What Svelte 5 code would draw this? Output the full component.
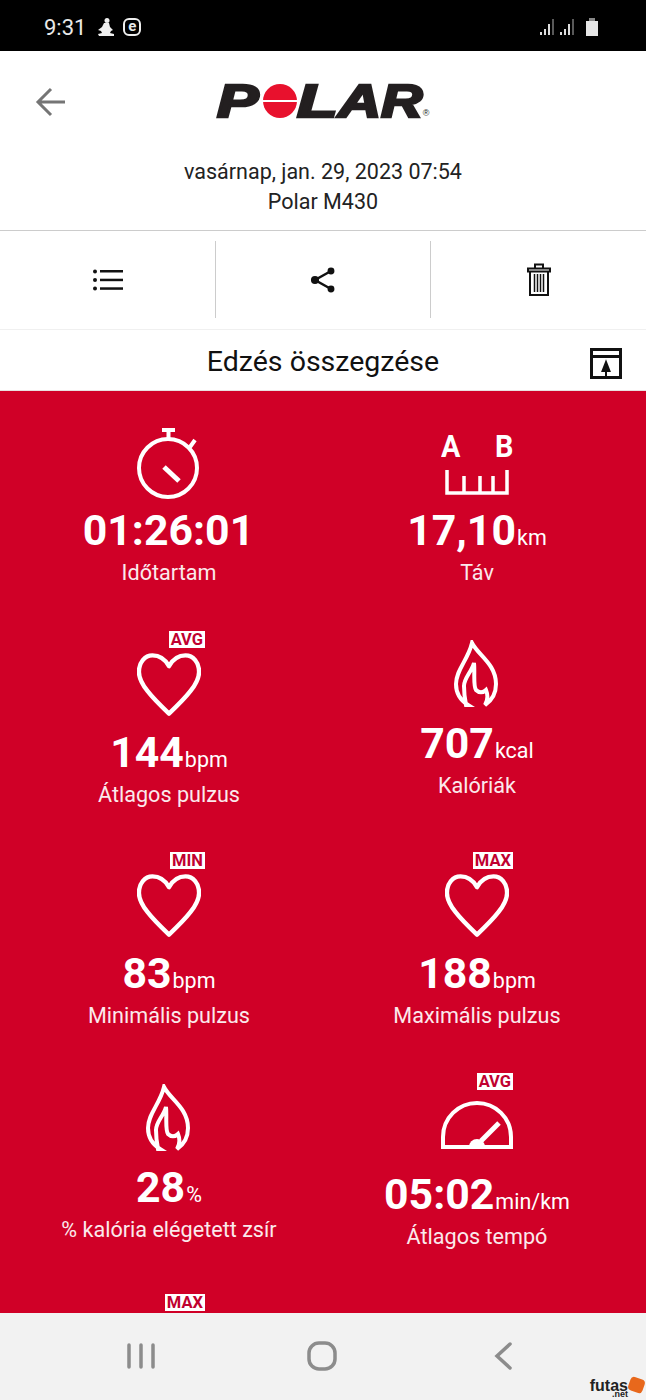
<script lang="ts">
  const stats = [
    { icon: 'watch', value: '01:26:01', unit: '', label: 'Időtartam', cls: 'h99' },
    { icon: 'dist', value: '17,10', unit: 'km', label: 'Táv', cls: 'h99' },
    { icon: 'heart', badge: 'AVG', value: '144', unit: 'bpm', label: 'Átlagos pulzus', cls: 'h100' },
    { icon: 'flame', value: '707', unit: 'kcal', label: 'Kalóriák', cls: 'h91' },
    { icon: 'heart', badge: 'MIN', value: '83', unit: 'bpm', label: 'Minimális pulzus', cls: 'h100' },
    { icon: 'heart', badge: 'MAX', value: '188', unit: 'bpm', label: 'Maximális pulzus', cls: 'h100' },
    { icon: 'flame', value: '28', unit: '%', label: '% kalória elégetett zsír', cls: 'h93' },
    { icon: 'gauge', badge: 'AVG', value: '05:02', unit: 'min/km', label: 'Átlagos tempó', cls: 'h100' },
    { icon: '', badge: 'MAX', value: '', unit: '', label: '', cls: 'h100' }
  ];
</script>

{#snippet icon(kind)}
  {#if kind === 'watch'}
    <svg width="64" height="74" viewBox="0 0 64 74" fill="none" stroke="#fff" stroke-width="4">
      <circle cx="31" cy="42" r="29" />
      <path d="M25 4h13M31.500 4v9M53 21l5-7" />
      <path d="M27 41l15 14" stroke-width="5" />
    </svg>
  {:else if kind === 'dist'}
    <div class="dist-in">
      <div class="ab"><span>A</span><span>B</span></div>
      <svg width="64" height="26" viewBox="0 0 64 26" fill="none" stroke="#fff" stroke-width="3.500">
        <path d="M2 1v23h60V1M19 7v17M35 7v17M48 7v17" />
      </svg>
    </div>
  {:else if kind === 'heart'}
    <svg width="64" height="64" viewBox="0 0 66 65" fill="none" stroke="#fff" stroke-width="4.500" stroke-linejoin="round">
      <path d="M33 13C29 6 23 2 16 2 8 2 2 9 2 19c0 12 13 26 31 43 18-17 31-31 31-43C64 9 58 2 50 2 43 2 37 6 33 13Z" />
    </svg>
  {:else if kind === 'flame'}
    <svg width="46" height="68" viewBox="0 0 46 68" fill="none" stroke="#fff" stroke-width="4" stroke-linejoin="miter">
      <path d="M14 65C6 60 2 52 2 44 2 30 14 20 18 3c6 12 24 21 24 41 0 10-5 17-11 21 3-5 3-10 1-15-3 3-7 3-10 0-3-4-1-18-2-27-3 10-10 15-10 23 0 7 1 14 2 19Z" />
    </svg>
  {:else if kind === 'gauge'}
    <svg width="72" height="48" viewBox="0 0 72 48" fill="none" stroke="#fff" stroke-width="4">
      <path d="M2 46V36a34 34 0 0 1 68 0v10Z" />
      <path d="M40 40l18-18" stroke-width="5" />
      <path d="M28 46a8 8 0 0 1 16 0Z" fill="#fff" stroke="none" />
    </svg>
  {/if}
{/snippet}

<div class="phone">
  <div class="status">
    <span class="time">9:31</span>
    <svg class="figure" width="18" height="20" viewBox="0 0 18 20" fill="#eee">
      <circle cx="10" cy="3.500" r="2.500" />
      <path d="M7 6h5l1 4 3 3-2 1-1 2 4 1v2H2l-1-2 4-1-1-2-3-1 4-3z" />
    </svg>
    <span class="e-box">e</span>
    <span class="spacer"></span>
    <svg width="66" height="20" viewBox="0 0 66 20" fill="none">
      <path d="M1 15v3M5 12v6M9 7v11" stroke="#ddd" stroke-width="2" />
      <path d="M13 2v16" stroke="#777" stroke-width="1.500" />
      <path d="M21 15v3M25 12v6M29 7v11" stroke="#ddd" stroke-width="2" />
      <path d="M33 2v16" stroke="#777" stroke-width="1.500" />
      <rect x="46" y="4" width="12" height="15" fill="#e6e6e6" />
      <rect x="49" y="1" width="6" height="3" fill="#888" />
    </svg>
  </div>

  <header class="head">
    <div class="logo-row">
      <svg class="back" width="30" height="30" viewBox="0 0 30 30" fill="none" stroke="#757575" stroke-width="3">
        <path d="M30 15H3M16 2 3 15l13 13" />
      </svg>
      <div class="logo">
        <span class="l-p"><span>P</span></span>
        <span class="l-o"></span>
        <span class="l-l"><span>L</span></span>
        <span class="l-a"><span>A</span></span>
        <span class="l-r"><span>R</span></span>
        <span class="l-reg">®</span>
      </div>
    </div>
    <div>vasárnap, jan. 29, 2023 07:54</div>
    <div>Polar M430</div>
  </header>

  <div class="tools">
    <div class="tool">
      <svg width="30" height="22" viewBox="0 0 30 22" fill="#111">
        <circle cx="2" cy="2.500" r="2" /><circle cx="2" cy="11" r="2" /><circle cx="2" cy="19.500" r="2" />
        <rect x="7" y="1" width="23" height="2.500" /><rect x="7" y="9.700" width="23" height="2.500" /><rect x="7" y="18.300" width="23" height="2.500" />
      </svg>
    </div>
    <div class="tool">
      <svg width="26" height="26" viewBox="0 0 26 26" fill="#111" stroke="#111" stroke-width="2.500">
        <path d="M21 4 5 13l16 9" fill="none" />
        <circle cx="21" cy="4" r="2.200" /><circle cx="5" cy="13" r="2.800" /><circle cx="21" cy="22" r="2.200" />
      </svg>
    </div>
    <div class="tool">
      <svg width="24" height="33" viewBox="0 0 24 33" fill="none" stroke="#111" stroke-width="2">
        <path d="M8 5V1.500h8V5M1 5.500h22v3H1zM3 8.500V32h18V8.500" />
        <path d="M7.500 11v18M10.500 11v18M13.500 11v18M16.500 11v18" stroke-width="1.500" />
      </svg>
    </div>
  </div>

  <div class="title">
    <span>Edzés összegzése</span>
    <svg class="t-icon" width="32" height="31" viewBox="0 0 32 31" fill="none" stroke="#111" stroke-width="3">
      <path d="M1.500 1.500h29v28h-29zM1.500 8.500h29" />
      <path d="M16 14l-3.500 9h7zM16 22v7" fill="#111" stroke-width="2" />
    </svg>
  </div>

  <main class="red">
    <div class="grid">
      {#each stats as s}
        <div class="cell">
          <div class="top {s.cls} {s.icon}">
            {#if s.badge}<span class="badge">{s.badge}</span>{/if}
            {@render icon(s.icon)}
          </div>
          {#if s.value}
            <div class="val">{s.value}<small>{s.unit}</small></div>
            <div class="lab">{s.label}</div>
          {/if}
        </div>
      {/each}
    </div>
  </main>

  <nav class="nav">
    <svg width="28" height="26" viewBox="0 0 28 26" fill="none" stroke="#8c8c8c" stroke-width="3.500" stroke-linecap="round">
      <path d="M2 2v22M14 2v22M26 2v22" />
    </svg>
    <svg width="30" height="30" viewBox="0 0 30 30" fill="none" stroke="#8c8c8c" stroke-width="3.500">
      <rect x="2" y="2" width="26" height="26" rx="10" />
    </svg>
    <svg class="nav-back" width="18" height="28" viewBox="0 0 18 28" fill="none" stroke="#8c8c8c" stroke-width="3.500" stroke-linecap="round">
      <path d="M16 2 3 14l13 12" />
    </svg>
    <div class="mark"><span>futas</span><b>.net</b><i></i></div>
  </nav>
</div>

<style>
  :global(body) {
    margin: 0;
    background: #fff;
  }

  .phone {
    width: 646px;
    height: 1400px;
    display: flex;
    flex-direction: column;
    overflow: hidden;
    font-family: Roboto, "Liberation Sans", sans-serif;
  }

  .status {
    height: 51px;
    flex-shrink: 0;
    background: #000;
    color: #e8e8e8;
    display: flex;
    align-items: center;
    padding: 3px 40px 0 44px;
    box-sizing: border-box;
  }

  .time {
    font-size: 22px;
    margin-right: 11px;
  }

  .figure {
    margin-right: 8px;
  }

  .e-box {
    width: 18px;
    height: 18px;
    box-sizing: border-box;
    border: 2px solid #eee;
    border-radius: 6px;
    font-size: 15px;
    font-weight: 700;
    line-height: 13px;
    text-align: center;
  }

  .spacer {
    flex: 1;
  }

  .head {
    height: 180px;
    flex-shrink: 0;
    box-sizing: border-box;
    padding-top: 33px;
    border-bottom: 1px solid #ccc;
    text-align: center;
    font-size: 21.500px;
    line-height: 30px;
    color: #222;
  }

  .logo-row {
    height: 34px;
    margin-bottom: 39px;
    display: flex;
    justify-content: center;
    position: relative;
  }

  .back {
    position: absolute;
    left: 35px;
    top: 3px;
  }

  .logo {
    width: 213px;
    height: 34px;
    display: flex;
    align-items: center;
    text-align: left;
    font-family: "Liberation Sans", sans-serif;
    font-style: italic;
    font-weight: 700;
    font-size: 46px;
    line-height: 34px;
    color: #231f20;
    -webkit-text-stroke: 2.500px #231f20;
    position: relative;
  }

  .logo > span {
    display: block;
    flex-shrink: 0;
  }

  .logo > span > span {
    display: inline-block;
    transform-origin: left center;
  }

  .l-p {
    width: 42px;
  }

  .l-p span {
    transform: scaleX(1.35);
  }

  .l-o {
    width: 34px;
    height: 34px;
    margin-left: 4px;
    border-radius: 50%;
    background: linear-gradient(#e8112d 0 47%, #fff 47% 54%, #e8112d 54%);
  }

  .l-l {
    width: 41px;
  }

  .l-l span {
    transform: scaleX(1.45);
  }

  .l-a {
    width: 43px;
  }

  .l-a span {
    transform: scaleX(1.3);
  }

  .l-r {
    width: 41px;
  }

  .l-r span {
    transform: scaleX(1.25);
  }

  .logo > .l-reg {
    position: absolute;
    right: 0;
    bottom: 0;
    font-size: 9px;
    line-height: 9px;
    font-style: normal;
    font-weight: 400;
    -webkit-text-stroke: 0;
  }

  .tools {
    height: 99px;
    flex-shrink: 0;
    box-sizing: border-box;
    padding: 10px 0 11px;
    border-bottom: 1px solid #f0f0f0;
    display: grid;
    grid-template-columns: 216px 215px 215px;
  }

  .tool {
    display: flex;
    align-items: center;
    justify-content: center;
    border-right: 1px solid #ccc;
  }

  .tool:last-child {
    border-right: 0;
  }

  .title {
    height: 61px;
    flex-shrink: 0;
    box-sizing: border-box;
    padding-top: 3px;
    border-bottom: 1px solid #e8e0e0;
    display: flex;
    align-items: center;
    justify-content: center;
    position: relative;
    font-size: 28.500px;
    color: #111;
  }

  .t-icon {
    position: absolute;
    right: 24px;
    top: 18px;
  }

  .red {
    flex: 1;
    min-height: 0;
    overflow: hidden;
    background: #d00027;
    color: #fff;
  }

  .grid {
    display: grid;
    grid-template-columns: 1fr 1fr;
    grid-auto-rows: 221px;
    padding: 18px 15px 0 15px;
  }

  .cell {
    display: flex;
    flex-direction: column;
    align-items: center;
  }

  .top {
    width: 100%;
    box-sizing: border-box;
    position: relative;
    display: flex;
    justify-content: center;
    align-items: flex-end;
  }

  .h99 { height: 99px; }
  .h100 { height: 100px; }
  .h91 { height: 91px; }
  .h93 { height: 93px; }

  .watch { padding-bottom: 8px; }
  .dist { padding-bottom: 13px; }
  .heart { padding-bottom: 13px; }
  .flame { padding-bottom: 13px; }
  .gauge { padding-bottom: 23px; }

  .dist-in .ab {
    width: 74px;
    display: flex;
    justify-content: space-between;
    font-size: 32px;
    font-weight: 700;
    line-height: 28px;
    margin-bottom: 9px;
  }

  .ab span {
    display: block;
    transform: scaleX(0.9);
  }

  .dist-in svg {
    display: block;
    margin: 0 auto;
  }

  .badge {
    position: absolute;
    top: 1px;
    right: calc(50% - 36px);
    background: #fff;
    color: #c00030;
    font-size: 16.500px;
    font-weight: 700;
    line-height: 17px;
    padding: 0 2px;
  }

  .val {
    height: 44px;
    font-size: 42.800px;
    font-weight: 700;
    line-height: 44px;
    white-space: nowrap;
  }

  .val small {
    font-size: 21.500px;
    font-weight: 400;
    margin-left: 1px;
  }

  .lab {
    margin-top: 9px;
    font-size: 21.600px;
    line-height: 24px;
    color: #fbe9ec;
    white-space: nowrap;
  }

  .nav {
    height: 87px;
    flex-shrink: 0;
    background: #f2f2f2;
    display: flex;
    align-items: center;
    position: relative;
    padding-left: 127px;
    gap: 152px;
    box-sizing: border-box;
    padding-bottom: 2px;
  }

  .nav-back {
    margin-left: 5px;
  }

  .mark {
    position: absolute;
    right: 18px;
    bottom: 9px;
    height: 11px;
    font-family: "Liberation Sans", sans-serif;
    font-weight: 700;
    font-size: 16px;
    line-height: 11px;
    color: #222;
  }

  .mark b {
    position: absolute;
    right: 0;
    top: 11px;
    font-size: 9px;
    line-height: 7px;
  }

  .mark i {
    position: absolute;
    right: -16px;
    top: -2px;
    width: 15px;
    height: 14px;
    border-radius: 4px;
    background: #e8681c;
    transform: rotate(20deg);
  }
</style>
